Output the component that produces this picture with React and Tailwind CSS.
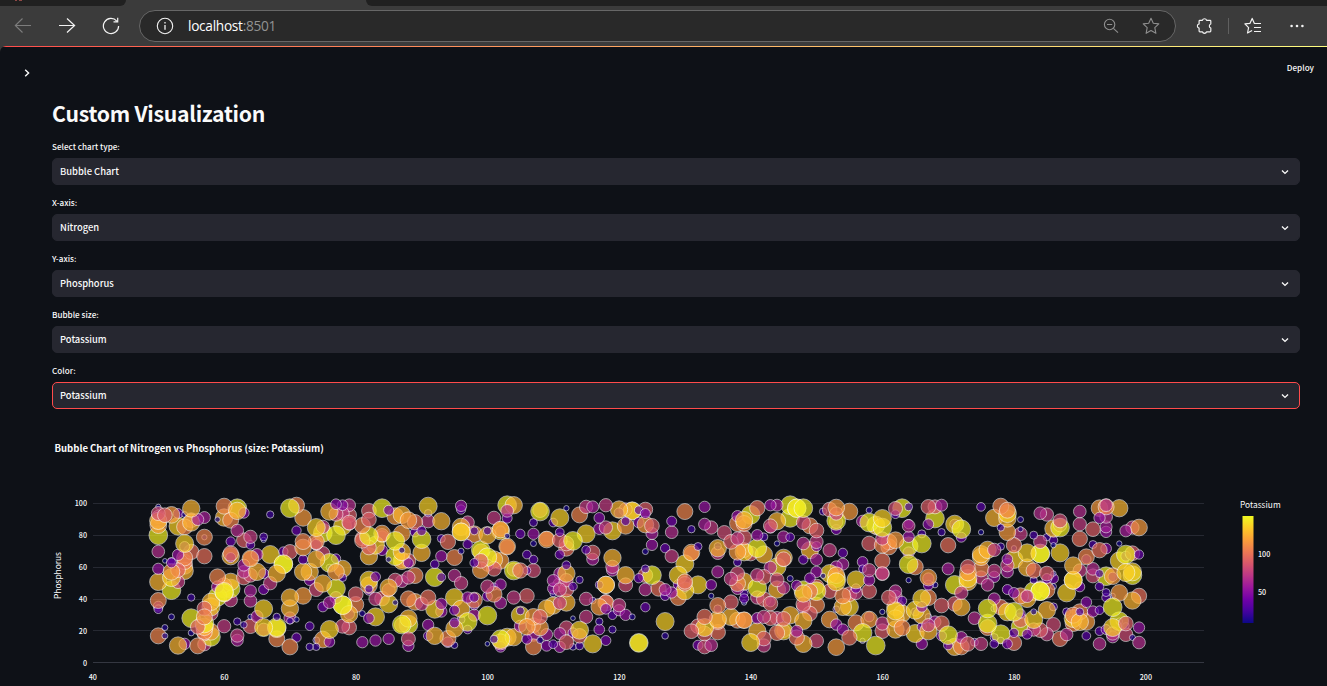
import React from "react";

const PLASMA = [
  [13, 8, 135], [70, 3, 159], [114, 1, 168], [156, 23, 158], [189, 55, 134],
  [216, 87, 107], [237, 121, 83], [251, 159, 58], [253, 202, 38], [240, 249, 33],
];

function plasma(t) {
  const u = Math.max(0, Math.min(1, t)) * 9;
  const i = Math.min(8, Math.floor(u));
  const f = u - i;
  const c = PLASMA[i].map((a, k) => Math.round(a + (PLASMA[i + 1][k] - a) * f));
  return `rgb(${c.join(",")})`;
}

// Each line is one nitrogen column: "column: y,radius y,radius ...", in thirds of a pixel.
const GROUPS = [
  { left: 140, columns: `
54: 50,8 70,21 92,26 105,25 95,21 80,20 135,28 184,19 236,17 275,26 331,24 357,13 348,15 437,24
74: 75,22 212,7 412,9 437,9
94: 74,25 213,11 218,15 245,25 262,27 300,28 380,9
114: 70,15 108,27 194,17 240,22 275,20 466,26
134: 73,9 110,24 160,27 169,15 203,24 215,23 242,26 228,24 461,17
153: 55,26 97,26 185,23 322,11 384,28 428,9 90,22
173: 88,18 410,22 467,24
193: 82,18 141,24 141,8 198,23 355,22 400,28 410,26 424,24 430,22 462,20 380,24
213: 335,26 350,27 370,21 425,25 440,28
232: 88,8 260,24 290,18 320,28
252: 48,24 82,26 297,26 305,28 308,27 408,20 285,22
272: 90,24 154,14 198,26 190,23 202,15 275,26 295,28 330,20
292: 54,28 62,26 121,19 394,11 436,20 450,18
312: 68,16 150,22 225,18 245,19 262,22 404,10
332: 140,20 164,13 205,25 205,22 255,21 302,18 332,19 380,8 408,22
351: 193,18 245,26 379,18
371: 140,12 149,8 250,15 298,15 356,27 412,27 418,19
391: 73,11 193,27 279,20
411: 250,26 380,11 411,28 415,27 446,24
430: 184,14 222,28 222,28
450: 54,28 185,22 322,26 355,26 383,18 392,10 470,24
470: 45,24 121,14 388,8 442,14
490: 83,25 154,24 172,25 208,14 245,26 317,25
509: 245,26 270,16 408,13 470,11
529: 112,27 154,24 163,16 160,20 207,26 298,21 470,11 450,10
549: 110,20 128,28 190,21 280,26 350,15 448,25
569: 64,26 218,28 232,10 337,18 418,27 455,16
588: 42,16 72,21 135,28 205,14 245,25 295,28 322,18` },
  { left: 340, columns: `
8: 45,16 70,20 108,27 236,26 262,12 345,28 345,28 408,21
27: 45,19 75,22 97,22 100,20 372,26 372,16 412,22
47: 312,22 343,24
67: 106,24 151,23 145,22 370,9 456,17
87: 62,22 88,22 138,28 172,22 198,26 270,27 285,25 300,15 296,12 384,16
107: 165,27 260,15 326,20 380,27 451,17
126: 54,28 130,25 135,20 140,18 180,16 325,22
146: 60,15 208,8 292,26 300,20 341,27 446,17
166: 78,25 152,28 198,28 270,21 337,8
186: 74,26 130,25 180,9 185,26 212,26 210,22 273,19 403,28 404,22
205: 90,25 218,15 212,22 262,20 326,24 385,26 403,28 446,21 467,17
225: 96,23 126,14 256,24 335,25
245: 122,14 147,28 188,26 341,20
265: 48,27 69,11 93,20 322,23 404,17 437,14
285: 222,13 261,28 357,27 437,26
304: 93,26 145,12 198,17 261,13 341,17 364,17
324: 155,23 445,24 456,16
344: 202,24 256,19 322,27 398,15 415,26 465,10 360,15
364: 47,17 58,14 110,26 125,27 125,26 183,9 279,20 356,26 388,12
383: 97,20 162,14 322,17 395,28 418,13
403: 122,12 132,25 218,13 322,14 330,24 345,14 375,18
423: 180,28 185,24 212,22 240,25
443: 122,12 135,26 201,28 225,18 289,20 318,15 376,28 461,7
462: 83,20 236,22 208,26 312,24 447,12 289,11
482: 118,25 122,27 122,15 212,25 283,17 338,18 447,28 455,24 470,16
502: 45,28 62,19 84,15 137,8 169,25 170,22 441,27 447,14
521: 45,26 241,28 322,20 441,26 238,20
541: 131,14 241,23 362,12 375,27 408,18
561: 193,13 241,12 317,22 410,25 447,15
581: 97,12 131,17 160,9 208,13 241,21 380,25 405,22 470,24 435,18` },
  { left: 540, columns: `
0: 64,28 60,22 380,22 412,25 450,10
20: 148,25 146,22 355,26 433,18 467,16
40: 97,13 271,18 295,17 310,10 346,26 462,13
60: 83,27 126,13 150,22 193,14 250,18 283,21 298,20 338,20 430,18 470,17
79: 54,8 160,22 175,23 225,13 250,26 270,20 298,22 337,26 413,21 456,22
99: 152,28 289,13 384,7 428,15 470,10
119: 74,24 269,11 420,27 437,22 467,12
139: 50,20 131,27 179,13 326,20 380,20
158: 50,18 187,22 207,18 331,10 461,27
178: 83,16 116,17 284,12 350,25 394,11 418,16
198: 45,20 112,20 284,26 284,26 338,24 333,20 356,16 451,15
218: 122,27 203,26 230,20 240,18 375,13 418,11
238: 58,26 68,15 345,20 360,17
257: 58,20 93,13 107,25 255,26 284,21 374,17
277: 62,27 62,26 380,9
297: 60,13 97,16 264,14 458,28 458,26
316: 58,22 70,15 103,25 184,9 236,12 255,22 298,19 351,14
336: 107,22 130,18 164,17 255,28
356: 295,23
376: 174,14 298,18 317,14 394,27 437,10
395: 93,15 126,19 198,20 307,17
415: 255,27 283,15 322,24
435: 64,24 221,27 274,23 281,22 302,27 302,7
455: 117,11 187,25 190,22 423,22
474: 169,12 284,27 408,22 408,8 465,15
494: 50,17 102,18 380,23 412,27 430,22 470,21
514: 112,20 284,16 317,8 465,19
534: 174,26 168,11 188,20 245,18 346,24 356,12 388,26 394,24 426,23
553: 127,21
573: 155,22 266,20 336,22 380,26
593: 78,17 100,24 145,20 185,25 216,12 250,21 280,24 295,18 390,24` },
  { left: 740, columns: `
12: 90,26 100,24 142,22 185,27 180,22 274,26 310,12 325,14 337,8 390,25 390,24
32: 74,28 190,22 457,27
52: 54,23 135,17 174,28 255,20 293,28 322,20 384,17 423,26
71: 140,12 193,26 260,22 327,22 380,20 445,22 466,20
91: 45,17 107,21 112,17 232,19 340,22 335,15 384,22
111: 45,18 93,26 160,8 230,27 269,21 298,26 428,23 384,20
131: 140,18 203,26 207,22 293,19 386,22 422,27 422,20
150: 45,28 83,28 141,13 265,9 375,26
170: 54,28 54,27 286,16 423,18 442,23
190: 54,28 97,21 160,19 208,14 300,28 310,26 342,22 392,26 461,26 350,20
210: 107,24 180,26 264,16 303,23 370,22
230: 121,22 155,20 169,15 208,18 245,17 303,28 290,23 345,24 452,21
249: 64,11 257,8
269: 58,22 180,20 250,27 303,22 388,25
289: 52,25 70,20 92,28 95,20 118,15 230,18 265,28 275,27 255,25 357,10 403,17 471,25
309: 188,14 222,18 317,24 350,26 418,17
329: 64,25 312,22 350,27 442,23
348: 269,27 295,14 308,20 398,24
368: 93,18 215,16 236,12 428,28 452,8
388: 60,9 97,28 160,22 240,20 270,17 303,22 388,25 380,15
407: 105,27 120,13 466,28
427: 85,27 112,28 145,20 165,24 212,23 250,21 250,20 365,8 400,20 423,22
447: 155,24 170,24 322,22
467: 55,21 72,13 150,25 303,19 320,20 350,26 362,27 385,26 418,26
486: 54,28 332,14 370,26 413,24
506: 50,12 107,19 102,14 140,17 168,28 187,17 222,28 270,8
526: 230,24 360,27 365,12 430,27
546: 131,12 160,28 325,27 350,16 375,26 410,14 461,17
565: 50,22 102,16 262,25 265,17 285,15 322,24 380,10 405,20 423,26
585: 50,21 85,28 284,9 395,18` },
  { left: 940, columns: `
5: 45,18 126,11 346,22 400,23 437,15
25: 165,23 236,18 435,28 465,14
44: 102,27 102,15 284,28 341,22 470,26
64: 117,28 141,15 308,20 351,26 442,18 470,24
84: 230,22 247,25 265,27 275,26 461,22
104: 384,19 456,12
123: 50,13 126,8 192,26 200,26 236,24 262,20 461,20
143: 179,26 284,19 355,28 400,28 412,24
163: 83,26 179,20 242,20 260,17 326,18 355,10 442,12 461,13
182: 48,24 112,11 169,11 351,23 432,28 451,10
202: 60,24 70,27 85,26 126,25 207,16 225,20 245,18 298,15 365,27 461,15
222: 165,23 174,8 208,27 308,16 365,28 428,14 458,23
242: 88,9 117,8 131,20 317,24 370,14 390,22 410,28
261: 188,27 232,26 318,19 326,26 432,15
281: 135,12 241,23 270,11 303,28 365,9 388,27 418,20
301: 69,19 155,20 190,28 190,28 303,28 303,28 290,18 420,22
321: 73,20 141,11 250,22 265,15 300,24 360,26 432,20
341: 115,26 150,13 165,8 250,8 265,15 289,9 350,12 403,21
360: 92,21 112,28 105,20 188,27 446,23
380: 308,27 365,12 433,19
400: 226,26 270,27 270,27 375,24 385,27 400,24
420: 64,19 102,20 146,23 241,20 290,15 365,24 365,12 395,26
439: 200,24 207,14 336,16 437,13 395,25
459: 117,22 163,12 236,19 257,21 364,17
479: 54,25 83,17 180,23 250,12 289,13 360,13 423,13 461,19
499: 45,19 50,24 80,19 110,18 125,17 175,16 258,28 307,12 322,13 418,15
518: 258,25 260,14 317,8 351,28 412,27 430,20 440,18
538: 54,26 160,8 212,27 308,25 393,28 393,10
558: 122,18 193,28 198,15 247,27 400,22 407,10 433,21
578: 112,20 189,22 255,28 245,27 331,26 442,9
598: 112,25 193,14 317,23 412,17 457,19` },
];

const BUBBLES = GROUPS.flatMap(({ left, columns }) =>
  columns.trim().split("\n").flatMap((line) => {
    const [col, rest] = line.split(": ");
    const n = Math.round(50 + (left + Number(col) / 3 - 158.2) / 6.585);
    return rest.split(" ").map((pair) => {
      const [y, r] = pair.split(",").map(Number);
      const potassium = 150 * (r / 28) ** 2;
      return { x: 158.3 + (n - 50) * 6.582, y: 490.2 + y / 3, r: r / 3, fill: plasma((potassium - 10) / 143) };
    });
  })
)
  // Large bubbles interleave with small ones instead of stacking strictly left to right.
  .map((b, i) => ({ ...b, order: (i * 7919) % 1009 }))
  .sort((a, b) => a.order - b.order);

const SANS = "font-['Noto_Sans_CJK_JP','Noto_Sans',sans-serif]";

function Select({ label, value, active }) {
  return (
    <div className="flex flex-col">
      <div className="h-[15px] text-[8.15px] leading-[15px] font-medium text-[#fafafa]">{label}</div>
      <div
        className={
          "mt-1 flex h-[27px] items-center justify-between rounded-[5px] border bg-[#262730] pr-[10px] pl-[7px] " +
          (active ? "border-[#ff4b4b]" : "border-[#262730]")
        }
      >
        <span className="pb-px text-[9.4px] leading-6 font-medium text-[#fafafa]">{value}</span>
        <svg className="size-2 text-[#fafafa]" viewBox="0 0 8 8" fill="none" stroke="currentColor" strokeWidth="1.4">
          <path d="M1 2.6 L4 5.4 L7 2.6" />
        </svg>
      </div>
    </div>
  );
}

function Toolbar() {
  return (
    <header className="font-['Open_Sans',sans-serif]">
      <div className="flex h-[6px] justify-between bg-[#3b3b3b]">
        <div className="flex h-[6px] w-[126px] items-start rounded-br-[6px] bg-[#202020] pl-[14px]">
          <svg className="h-[2px] w-[9px]" viewBox="0 0 9 2"><path d="M1 0h2v1h-2zM5 0h3v1h-3z" fill="#8f4845" /></svg>
        </div>
        <div className="h-[6px] w-[961px] rounded-bl-[6px] bg-[#202020]" />
      </div>
      <div className="flex h-10 items-center bg-[#3b3b3b] text-[#f2f2f2]">
        <svg className="ml-[14px] h-5 w-[18px] text-[#7d7d7d]" viewBox="0 0 18 20" fill="none" stroke="currentColor" strokeWidth="1.1">
          <path d="M17 9.5H1.5M8.5 2.5L1.3 9.5L8.5 16.5" />
        </svg>
        <svg className="ml-[26px] h-5 w-[18px]" viewBox="0 0 18 20" fill="none" stroke="currentColor" strokeWidth="1.2">
          <path d="M1 9.5H16.5M9 2.5L16.6 9.5L9 16.5" />
        </svg>
        <svg className="ml-[26px] h-5 w-[18px]" viewBox="0 0 18 20" fill="none" stroke="currentColor" strokeWidth="1.2">
          <path d="M16.6 10A7.6 7.6 0 1 1 14.8 5.1M11.5 5.8H15.7V1.8" />
        </svg>
        <div className="ml-[19px] flex h-8 w-[1037px] items-center rounded-full border border-[#676767] bg-[#292929] pt-px">
          <svg className="-mt-px ml-4 size-[18px]" viewBox="0 0 18 18" fill="none" stroke="currentColor" strokeWidth="1.1">
            <circle cx="9" cy="9" r="7.7" />
            <path d="M9 8V12.7M9 5V6.4" strokeWidth="1.3" />
          </svg>
          <div className="-mt-px ml-[14px] flex-1 text-[13.7px] leading-5 tracking-[-0.3px] text-white">
            localhost<span className="text-[#929292]">:8501</span>
          </div>
          <svg className="-mt-px size-4 text-[#8e8e8e]" viewBox="0 0 16 16" fill="none" stroke="currentColor" strokeWidth="1.1">
            <circle cx="6.6" cy="6.5" r="5.2" />
            <path d="M10.4 10.3L15 14.6M4 6.5H9.2" />
          </svg>
          <svg className="-mt-px mr-[15px] ml-[23px] size-[18px] text-[#8e8e8e]" viewBox="0 0 18 18" fill="none" stroke="currentColor" strokeWidth="1.1" strokeLinejoin="round">
            <path d="M9 1.3L11.3 6.3L16.8 6.9L12.8 10.7L13.9 16.3L9 13.6L4.1 16.3L5.2 10.7L1.2 6.9L6.7 6.3Z" />
          </svg>
        </div>
        <svg className="ml-[19px] size-[18px]" viewBox="0 0 18 18" fill="none" stroke="currentColor" strokeWidth="1.2" strokeLinejoin="round">
          <path d="M4.9 3.3H7.4A2.2 2.2 0 0 1 11.6 3.3H15Q15.8 3.3 15.8 4.1V7A2.1 2.1 0 0 0 15.8 11V14Q15.8 14.8 15 14.8H11.6A2.2 2.2 0 0 1 7.4 14.8H4.9Q4.1 14.8 4.1 14V11.2A2.2 2.2 0 0 1 4.1 6.9V4.1Q4.1 3.3 4.9 3.3Z" />
        </svg>
        <div className="ml-[15px] h-4 w-px bg-[#606060]" />
        <svg className="ml-[15px] size-[18px]" viewBox="0 0 18 18" fill="none" stroke="currentColor" strokeWidth="1.2" strokeLinejoin="round">
          <path d="M10.4 6.5L8.2 1.4L5.9 6.4L0.9 6.9L4.6 10.7L3.5 16L8.1 13.4M10 6.5H17M10 10.5H17M10 14.5H17" />
        </svg>
        <svg className="ml-[26px] h-[18px] w-[18px]" viewBox="0 0 18 18" fill="currentColor">
          <circle cx="3.6" cy="9" r="1.3" /><circle cx="9" cy="9" r="1.3" /><circle cx="14.4" cy="9" r="1.3" />
        </svg>
      </div>
    </header>
  );
}

function Chart() {
  return (
    <svg className="block h-[262px] w-full" viewBox="0 424 1327 262" fill="#fafafa">
      <defs>
        <linearGradient id="scale" x1="0" y1="1" x2="0" y2="0">
          {PLASMA.map((c, i) => (
            <stop key={i} offset={i / 9} stopColor={`rgb(${c.join(",")})`} />
          ))}
        </linearGradient>
      </defs>
      <text x="54.5" y="452" className="text-[9.55px] font-bold">Bubble Chart of Nitrogen vs Phosphorus (size: Potassium)</text>
      {[100, 80, 60, 40, 20, 0].map((v, i) => (
        <g key={v}>
          <path d={`M93 ${[503.5, 535.5, 567.5, 599.5, 630.5, 662.5][i]}H1204`} stroke={v ? "#262932" : "#343741"} />
          <text x="87" y={506 + i * 32} textAnchor="end" className="text-[7.2px] font-medium">{v}</text>
        </g>
      ))}
      {[40, 60, 80, 100, 120, 140, 160, 180, 200].map((v) => (
        <text key={v} x={92.8 + (v - 40) * 6.582} y="680" textAnchor="middle" className="text-[7.2px] font-medium">{v}</text>
      ))}
      <text transform="translate(61 575.5) rotate(-90)" textAnchor="middle" className="text-[8.4px]">Phosphorus</text>
      {BUBBLES.map((b, i) => (
        <circle key={i} cx={b.x} cy={b.y} r={b.r} fill={b.fill} stroke="#ffffff" strokeWidth="1" opacity="0.7" strokeOpacity="0.8" />
      ))}
      <text x="1240" y="508" className="text-[8.4px]">Potassium</text>
      <rect x="1242.5" y="516" width="11" height="107" fill="url(#scale)" />
      <text x="1258" y="557" className="text-[7.2px] font-medium">100</text>
      <text x="1258" y="595" className="text-[7.2px] font-medium">50</text>
    </svg>
  );
}

export default function App() {
  return (
    <div className="h-[686px] w-[1327px] overflow-hidden bg-[#3b3b3b]">
      <Toolbar />
      <main className={"h-[640px] overflow-hidden rounded-tl-[6px] bg-[#0e1117] text-[#fafafa] " + SANS}>
        <div className="h-px bg-linear-to-r from-[#ff4b4b] to-[#fffd80]" />
        <div className="flex h-[52px] justify-between pr-[13px] pl-[23px]">
          <svg className="mt-[22px] size-2" viewBox="0 0 8 8" fill="none" stroke="currentColor" strokeWidth="1.4">
            <path d="M2.2 0.8L5.6 4L2.2 7.2" />
          </svg>
          <span className="mt-[14px] text-[8.15px] leading-[14px] font-medium">Deploy</span>
        </div>
        <h1 className="h-[40px] pl-[52px] text-[21.2px] leading-[28px] font-bold tracking-[-0.25px]">Custom Visualization</h1>
        <div className="flex h-[285px] flex-col gap-[10px] pr-[27px] pl-[52px]">
          <Select label="Select chart type:" value="Bubble Chart" />
          <Select label="X-axis:" value="Nitrogen" />
          <Select label="Y-axis:" value="Phosphorus" />
          <Select label="Bubble size:" value="Potassium" />
          <Select label="Color:" value="Potassium" active />
        </div>
        <Chart />
      </main>
    </div>
  );
}
